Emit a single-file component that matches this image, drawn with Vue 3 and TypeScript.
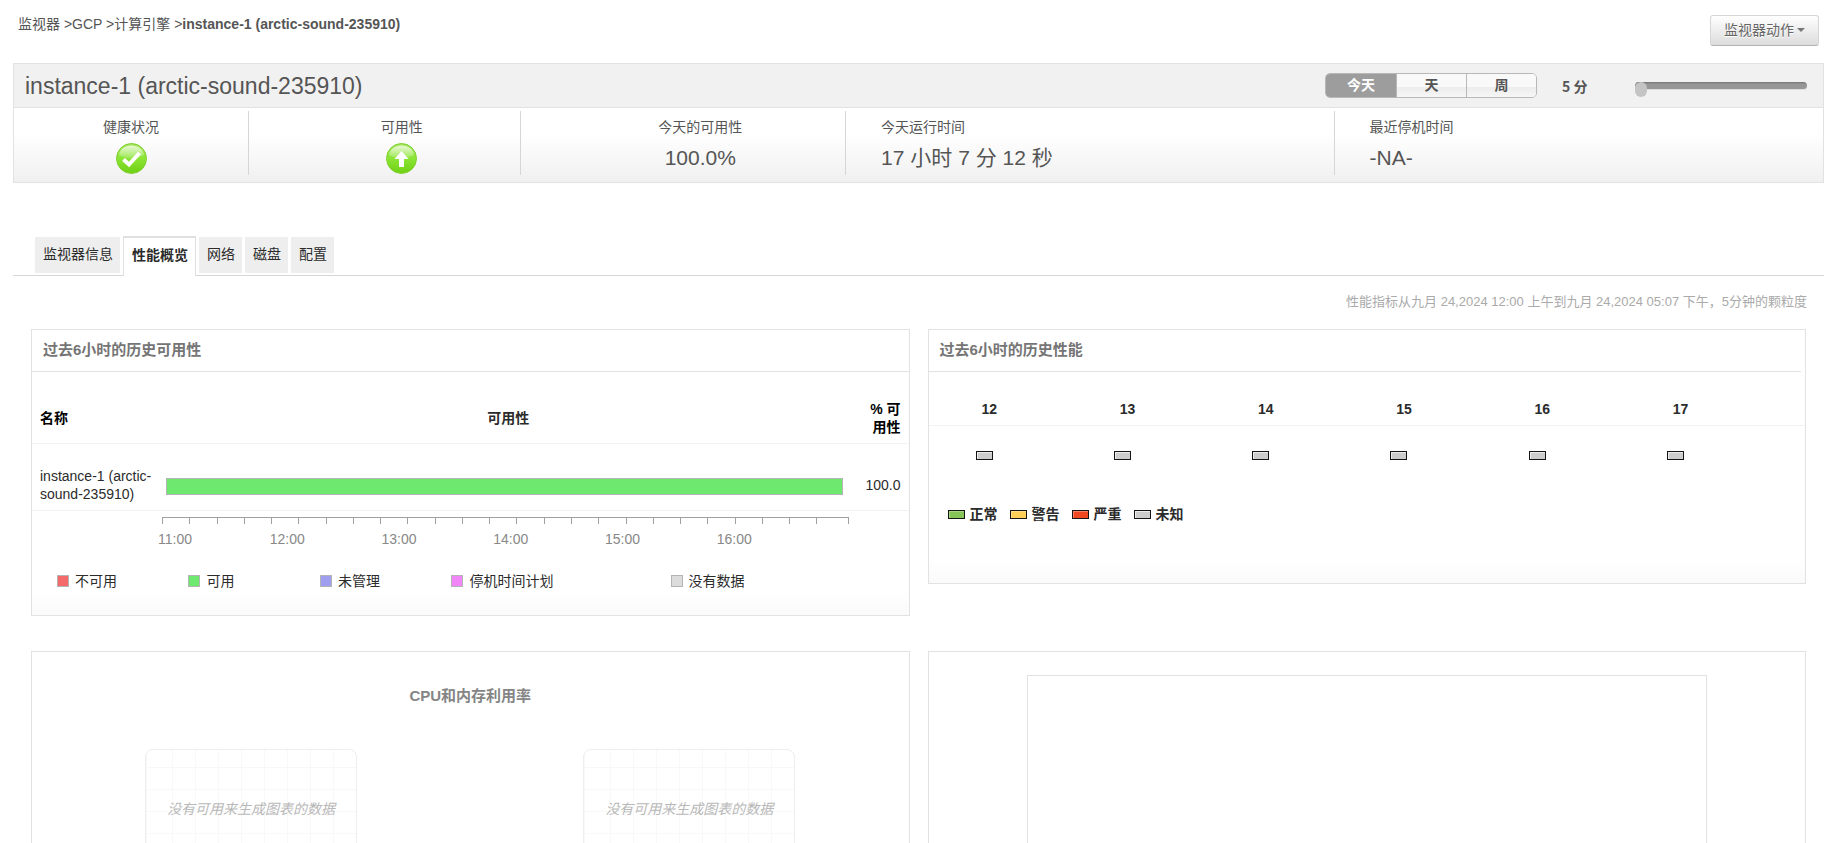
<script setup lang="ts">
import { ref } from 'vue'

interface LegendItem {
  label: string
  tone: string
}

const crumbs: string[] = ['监视器', 'GCP', '计算引擎']
const instanceName = 'instance-1 (arctic-sound-235910)'

const ranges: string[] = ['今天', '天', '周']
const activeRange = ref('今天')
const interval = ref(5)

const tabs: string[] = ['监视器信息', '性能概览', '网络', '磁盘', '配置']
const activeTab = ref('性能概览')

const ticks = 25
const axisLabels: string[] = ['11:00', '12:00', '13:00', '14:00', '15:00', '16:00']

const availabilityLegend: LegendItem[] = [
  { label: '不可用', tone: 'down' },
  { label: '可用', tone: 'up' },
  { label: '未管理', tone: 'unmanaged' },
  { label: '停机时间计划', tone: 'scheduled' },
  { label: '没有数据', tone: 'nodata' },
]

const hours: string[] = ['12', '13', '14', '15', '16', '17']
const healthLegend: LegendItem[] = [
  { label: '正常', tone: 'clear' },
  { label: '警告', tone: 'warning' },
  { label: '严重', tone: 'critical' },
  { label: '未知', tone: 'unknown' },
]
</script>

<template>
  <div class="page">
    <header class="top">
      <nav class="crumbs">
        <template v-for="c in crumbs" :key="c"><a href="#">{{ c }}</a> &gt;</template><strong>{{ instanceName }}</strong>
      </nav>
      <button type="button" class="action">监视器动作<span class="caret"></span></button>
    </header>

    <section class="summary">
      <div class="summary-head">
        <h1>{{ instanceName }}</h1>
        <div class="segments">
          <button
            v-for="r in ranges"
            :key="r"
            type="button"
            :class="{ on: r === activeRange }"
            @click="activeRange = r"
          >{{ r }}</button>
        </div>
        <label class="interval" for="interval">{{ interval }} 分</label>
        <input id="interval" v-model.number="interval" class="slider" type="range" min="5" max="60" step="5" />
      </div>
      <div class="stats">
        <div class="stat health">
          <span class="stat-label">健康状况</span>
          <svg class="status" viewBox="0 0 31 31" role="img" aria-label="正常">
            <defs>
              <linearGradient id="ball" x1="0" y1="0" x2="0" y2="1">
                <stop offset="0" stop-color="#a4e65c" />
                <stop offset="0.5" stop-color="#8be534" />
                <stop offset="1" stop-color="#6fd013" />
              </linearGradient>
              <linearGradient id="shine" x1="0" y1="0" x2="0" y2="1">
                <stop offset="0" stop-color="#fff" stop-opacity="0.75" />
                <stop offset="1" stop-color="#fff" stop-opacity="0.12" />
              </linearGradient>
            </defs>
            <circle cx="15.5" cy="15.5" r="15" fill="url(#ball)" stroke="#82cf35" />
            <path d="M3 12C4 6 9 2.500 15.500 2.500S27 6 28 12C23 14.500 19 15.500 15.500 15.500S7 14.500 3 12Z" fill="url(#shine)" />
            <path d="M7.500 16.500L13 21.500L23.500 10" fill="none" stroke="#fff" stroke-width="4" />
          </svg>
        </div>
        <div class="stat avail">
          <span class="stat-label">可用性</span>
          <svg class="status" viewBox="0 0 31 31" role="img" aria-label="可用">
            <circle cx="15.5" cy="15.5" r="15" fill="url(#ball)" stroke="#82cf35" />
            <path d="M3 12C4 6 9 2.500 15.500 2.500S27 6 28 12C23 14.500 19 15.500 15.500 15.500S7 14.500 3 12Z" fill="url(#shine)" />
            <path d="M15.500 8L22.500 16H18V24H13V16H8.500Z" fill="#fff" />
          </svg>
        </div>
        <div class="stat today">
          <span class="stat-label">今天的可用性</span>
          <span class="stat-value">100.0%</span>
        </div>
        <div class="stat long">
          <span class="stat-label">今天运行时间</span>
          <span class="stat-value">17 小时 7 分 12 秒</span>
        </div>
        <div class="stat long">
          <span class="stat-label">最近停机时间</span>
          <span class="stat-value">-NA-</span>
        </div>
      </div>
    </section>

    <nav class="tabs">
      <button
        v-for="t in tabs"
        :key="t"
        type="button"
        :class="['tab', { active: t === activeTab }]"
        @click="activeTab = t"
      >{{ t }}</button>
    </nav>

    <p class="note">性能指标从九月 24,2024 12:00 上午到九月 24,2024 05:07 下午，5分钟的颗粒度</p>

    <main class="panels">
      <section class="panel">
        <h2>过去6小时的历史可用性</h2>
        <table class="availability">
          <colgroup>
            <col class="col-name" />
            <col />
            <col class="col-percent" />
          </colgroup>
          <thead>
            <tr>
              <th>名称</th>
              <th class="mid">可用性</th>
              <th class="num">% 可<br />用性</th>
            </tr>
          </thead>
          <tbody>
            <tr>
              <td class="name">{{ instanceName }}</td>
              <td class="bar-cell"><div class="bar"></div></td>
              <td class="num">100.0</td>
            </tr>
          </tbody>
        </table>
        <div class="axis">
          <div class="ticks"><i v-for="n in ticks" :key="n"></i></div>
          <div class="axis-labels"><span v-for="a in axisLabels" :key="a">{{ a }}</span></div>
        </div>
        <ul class="legend">
          <li v-for="l in availabilityLegend" :key="l.tone" :class="l.tone"><i></i>{{ l.label }}</li>
        </ul>
      </section>

      <section class="panel">
        <h2 class="inset">过去6小时的历史性能</h2>
        <table class="performance">
          <thead>
            <tr>
              <th class="lead"></th>
              <th v-for="h in hours" :key="h">{{ h }}</th>
            </tr>
          </thead>
          <tbody>
            <tr>
              <td></td>
              <td v-for="h in hours" :key="h"><i class="chip unknown"></i></td>
            </tr>
          </tbody>
        </table>
        <ul class="health-legend">
          <li v-for="l in healthLegend" :key="l.tone"><i :class="['chip', l.tone]"></i>{{ l.label }}</li>
        </ul>
      </section>
    </main>

    <div class="panels charts">
      <section class="panel plain">
        <h3>CPU和内存利用率</h3>
        <div class="empties">
          <div v-for="n in 2" :key="n" class="empty">没有可用来生成图表的数据</div>
        </div>
      </section>
      <section class="panel plain">
        <div class="frame"></div>
      </section>
    </div>
  </div>
</template>

<style>
body {
  background: #fff;
}
</style>

<style scoped>
.page {
  font-family: "Liberation Sans", Arial, "Noto Sans CJK SC", sans-serif;
  font-size: 14px;
  line-height: 18px;
  color: #2b2b2b;
}
button {
  font: inherit;
  cursor: pointer;
}
ul {
  list-style: none;
  margin: 0;
  padding: 0;
}
.top {
  display: flex;
  justify-content: space-between;
  align-items: flex-start;
  height: 63px;
  padding: 15px 14px 0 18px;
  box-sizing: border-box;
  color: #555;
}
.crumbs a {
  color: inherit;
  text-decoration: none;
}
.action {
  display: flex;
  align-items: center;
  gap: 3px;
  height: 31px;
  padding: 0 13px 2px;
  border: 1px solid #d6d6d6;
  border-bottom-color: #b3b3b3;
  border-radius: 3px;
  background: linear-gradient(#fff, #dcdcdc);
  color: #666;
  text-shadow: 0 1px 0 #fff;
}
.caret {
  border: 4px solid transparent;
  border-top-color: #777;
  border-bottom-width: 0;
}

.summary {
  margin: 0 9px 0 13px;
  border: 1px solid #e2e2e2;
  color: #555;
}
.summary-head {
  display: flex;
  align-items: center;
  height: 43px;
  padding: 0 16px 0 11px;
  background: #f1f1f1;
  border-bottom: 1px solid #e2e2e2;
}
.summary-head h1 {
  flex: 1;
  margin: 0;
  font-size: 23px;
  line-height: 28px;
  font-weight: normal;
}
.segments {
  display: flex;
  border: 1px solid #b8b8b8;
  border-radius: 5px;
  overflow: hidden;
}
.segments button {
  width: 70px;
  height: 23px;
  padding: 0 0 2px;
  border: 0;
  font-weight: bold;
  line-height: 20px;
  color: #555;
  background: linear-gradient(#f9f9f9 55%, #ececec 55%, #f6f6f6);
}
.segments button + button {
  border-left: 1px solid #b8b8b8;
}
.segments button.on {
  background: #9d9d9d;
  color: #fff;
}
.interval {
  width: 73px;
  margin-left: 25px;
  font-family: "Noto Sans CJK SC", sans-serif;
  font-weight: bold;
}
.slider {
  appearance: none;
  width: 172px;
  height: 7px;
  margin: 0;
  background: none;
}
.slider::-webkit-slider-runnable-track {
  height: 7px;
  border-radius: 4px;
  background: linear-gradient(#737373, #969696 30%);
  box-shadow: 0 1px 1px #ddd;
}
.slider::-webkit-slider-thumb {
  appearance: none;
  width: 12px;
  height: 15px;
  border-radius: 6px;
  background: #c4c4c4;
}
.stats {
  display: flex;
  padding: 3px 0 7px;
  background: linear-gradient(#fff 35%, #f0f0f0);
}
.stat {
  display: flex;
  flex-direction: column;
  align-items: center;
  box-sizing: border-box;
  height: 64px;
  padding: 7px 0 0 35px;
  border-right: 1px solid #d6d6d6;
}
.stat:last-child {
  border-right: 0;
}
.health {
  width: 13%;
  padding-left: 0;
}
.avail {
  width: 15%;
}
.today {
  width: 18%;
}
.long {
  width: 27%;
  align-items: flex-start;
}
.status {
  width: 31px;
  height: 31px;
  margin-top: 7px;
}
.stat-value {
  margin-top: 8px;
  font-size: 21px;
  line-height: 28px;
}

.tabs {
  display: flex;
  align-items: flex-start;
  gap: 3px;
  height: 39px;
  margin: 53px 9px 0 13px;
  padding-left: 22px;
  border-bottom: 1px solid #d6d6d6;
}
.tab {
  height: 36px;
  margin-top: 1px;
  padding: 0 7px 2px 8px;
  border: 0;
  background: #eee;
  color: #2b2b2b;
}
.tab.active {
  height: 40px;
  margin-top: 0;
  padding-bottom: 5px;
  border: 1px solid #e0e0e0;
  border-top-width: 2px;
  border-bottom: 0;
  background: #fff;
  font-weight: bold;
}
.note {
  margin: 17px 26px 18px 0;
  text-align: right;
  font-size: 13px;
  color: #aaa;
}

.panels {
  display: grid;
  grid-template-columns: 1fr 1fr;
  gap: 18px;
  align-items: start;
  margin: 0 27px 0 31px;
}
.panel {
  border: 1px solid #e2e2e2;
  background: linear-gradient(#fff, #fafafa) bottom / 100% 24px no-repeat;
}
.panel h2 {
  margin: 0;
  padding: 11px 12px 12px 11px;
  border-bottom: 1px solid #e2e2e2;
  font-size: 15px;
  color: #757575;
}
.panel h2.inset {
  margin-right: 4px;
}
table {
  width: 100%;
  border-collapse: collapse;
  table-layout: fixed;
}
.availability th,
.availability td {
  padding: 0 8px;
  text-align: left;
  border-bottom: 1px solid #f3f3f3;
}
.availability th {
  height: 51px;
  padding-top: 20px;
  color: #000;
}
.availability td {
  height: 50px;
  padding-top: 16px;
}
.availability th.mid {
  padding-left: 24px;
  text-align: center;
  color: #2b2b2b;
}
.availability td.name {
  padding-right: 0;
}
.availability .num {
  text-align: right;
}
.availability .bar-cell {
  padding-right: 0;
}
.col-name {
  width: 126px;
}
.col-percent {
  width: 66px;
}
.bar {
  height: 15px;
  margin-top: 3px;
  border: 1px solid #b4b4b4;
  background: #6ee86e;
}
.axis {
  margin: 6px 60px 0 130px;
}
.ticks {
  display: flex;
  height: 6px;
  border-top: 1px solid #a0a0a0;
  border-right: 1px solid #a0a0a0;
}
.ticks i {
  flex: 27;
  border-left: 1px solid #a0a0a0;
}
.ticks i:last-child {
  flex: 31;
}
.axis-labels {
  display: grid;
  grid-template-columns: repeat(6, 1fr);
  margin: 6px 20px 0 -4px;
  padding-bottom: 1px;
  color: #888;
}
.legend {
  display: flex;
  padding: 23px 0 25px;
}
.legend li {
  display: flex;
  align-items: center;
  gap: 6px;
  flex: 0 0 15%;
  box-sizing: border-box;
  padding-left: 25px;
}
.legend li.scheduled {
  flex-basis: 25%;
}
.legend i {
  width: 10px;
  height: 10px;
  border: 1px solid #b4b4b4;
}
.down i { background: #f46a6a; }
.up i { background: #6ee86e; }
.unmanaged i { background: #a09eee; }
.scheduled i { background: #f086f8; }
.nodata i { background: #dcdcdc; }

.performance th {
  height: 26px;
  padding: 24px 0 3px 6px;
  text-align: left;
  border-bottom: 1px solid #f3f3f3;
}
.performance th.lead {
  width: 41px;
}
.performance td {
  padding: 25px 0 0;
}
.chip {
  display: block;
  box-sizing: border-box;
  width: 17px;
  height: 9px;
  border: 1px solid #151515;
}
.chip.clear { background: #86c558; box-shadow: inset 1px 1px #a5d683; }
.chip.warning { background: #ffcf57; box-shadow: inset 1px 1px #ffdc85; }
.chip.critical { background: #ee4722; box-shadow: inset 1px 1px #f57f65; }
.chip.unknown { background: #cdcdcd; box-shadow: inset 1px 1px #ececec; }
.health-legend {
  display: flex;
  gap: 12px;
  margin-left: 19px;
  padding: 45px 0 60px;
  font-weight: bold;
}
.health-legend li {
  display: flex;
  align-items: center;
  gap: 5px;
}

.charts {
  margin-top: 35px;
  align-items: stretch;
}
.plain {
  background: #fff;
}
.panel h3 {
  margin: 35px 0 44px;
  text-align: center;
  font-size: 15px;
  color: #858585;
}
.empties {
  display: grid;
  grid-template-columns: 1fr 1fr;
  justify-items: center;
  padding-bottom: 40px;
}
.empty {
  width: 210px;
  height: 118px;
  border: 1px solid #eee;
  border-radius: 8px;
  line-height: 118px;
  text-align: center;
  font-style: italic;
  color: #b8b8b8;
  background:
    repeating-linear-gradient(90deg, transparent 0 22px, #f8f8f8 22px 23px) 4px 0,
    repeating-linear-gradient(transparent 0 21px, #f8f8f8 21px 22px) 0 -4px,
    #fff;
}
.frame {
  height: 220px;
  margin: 23px 98px 0;
  box-sizing: border-box;
  border: 1px solid #e2e2e2;
}
</style>
